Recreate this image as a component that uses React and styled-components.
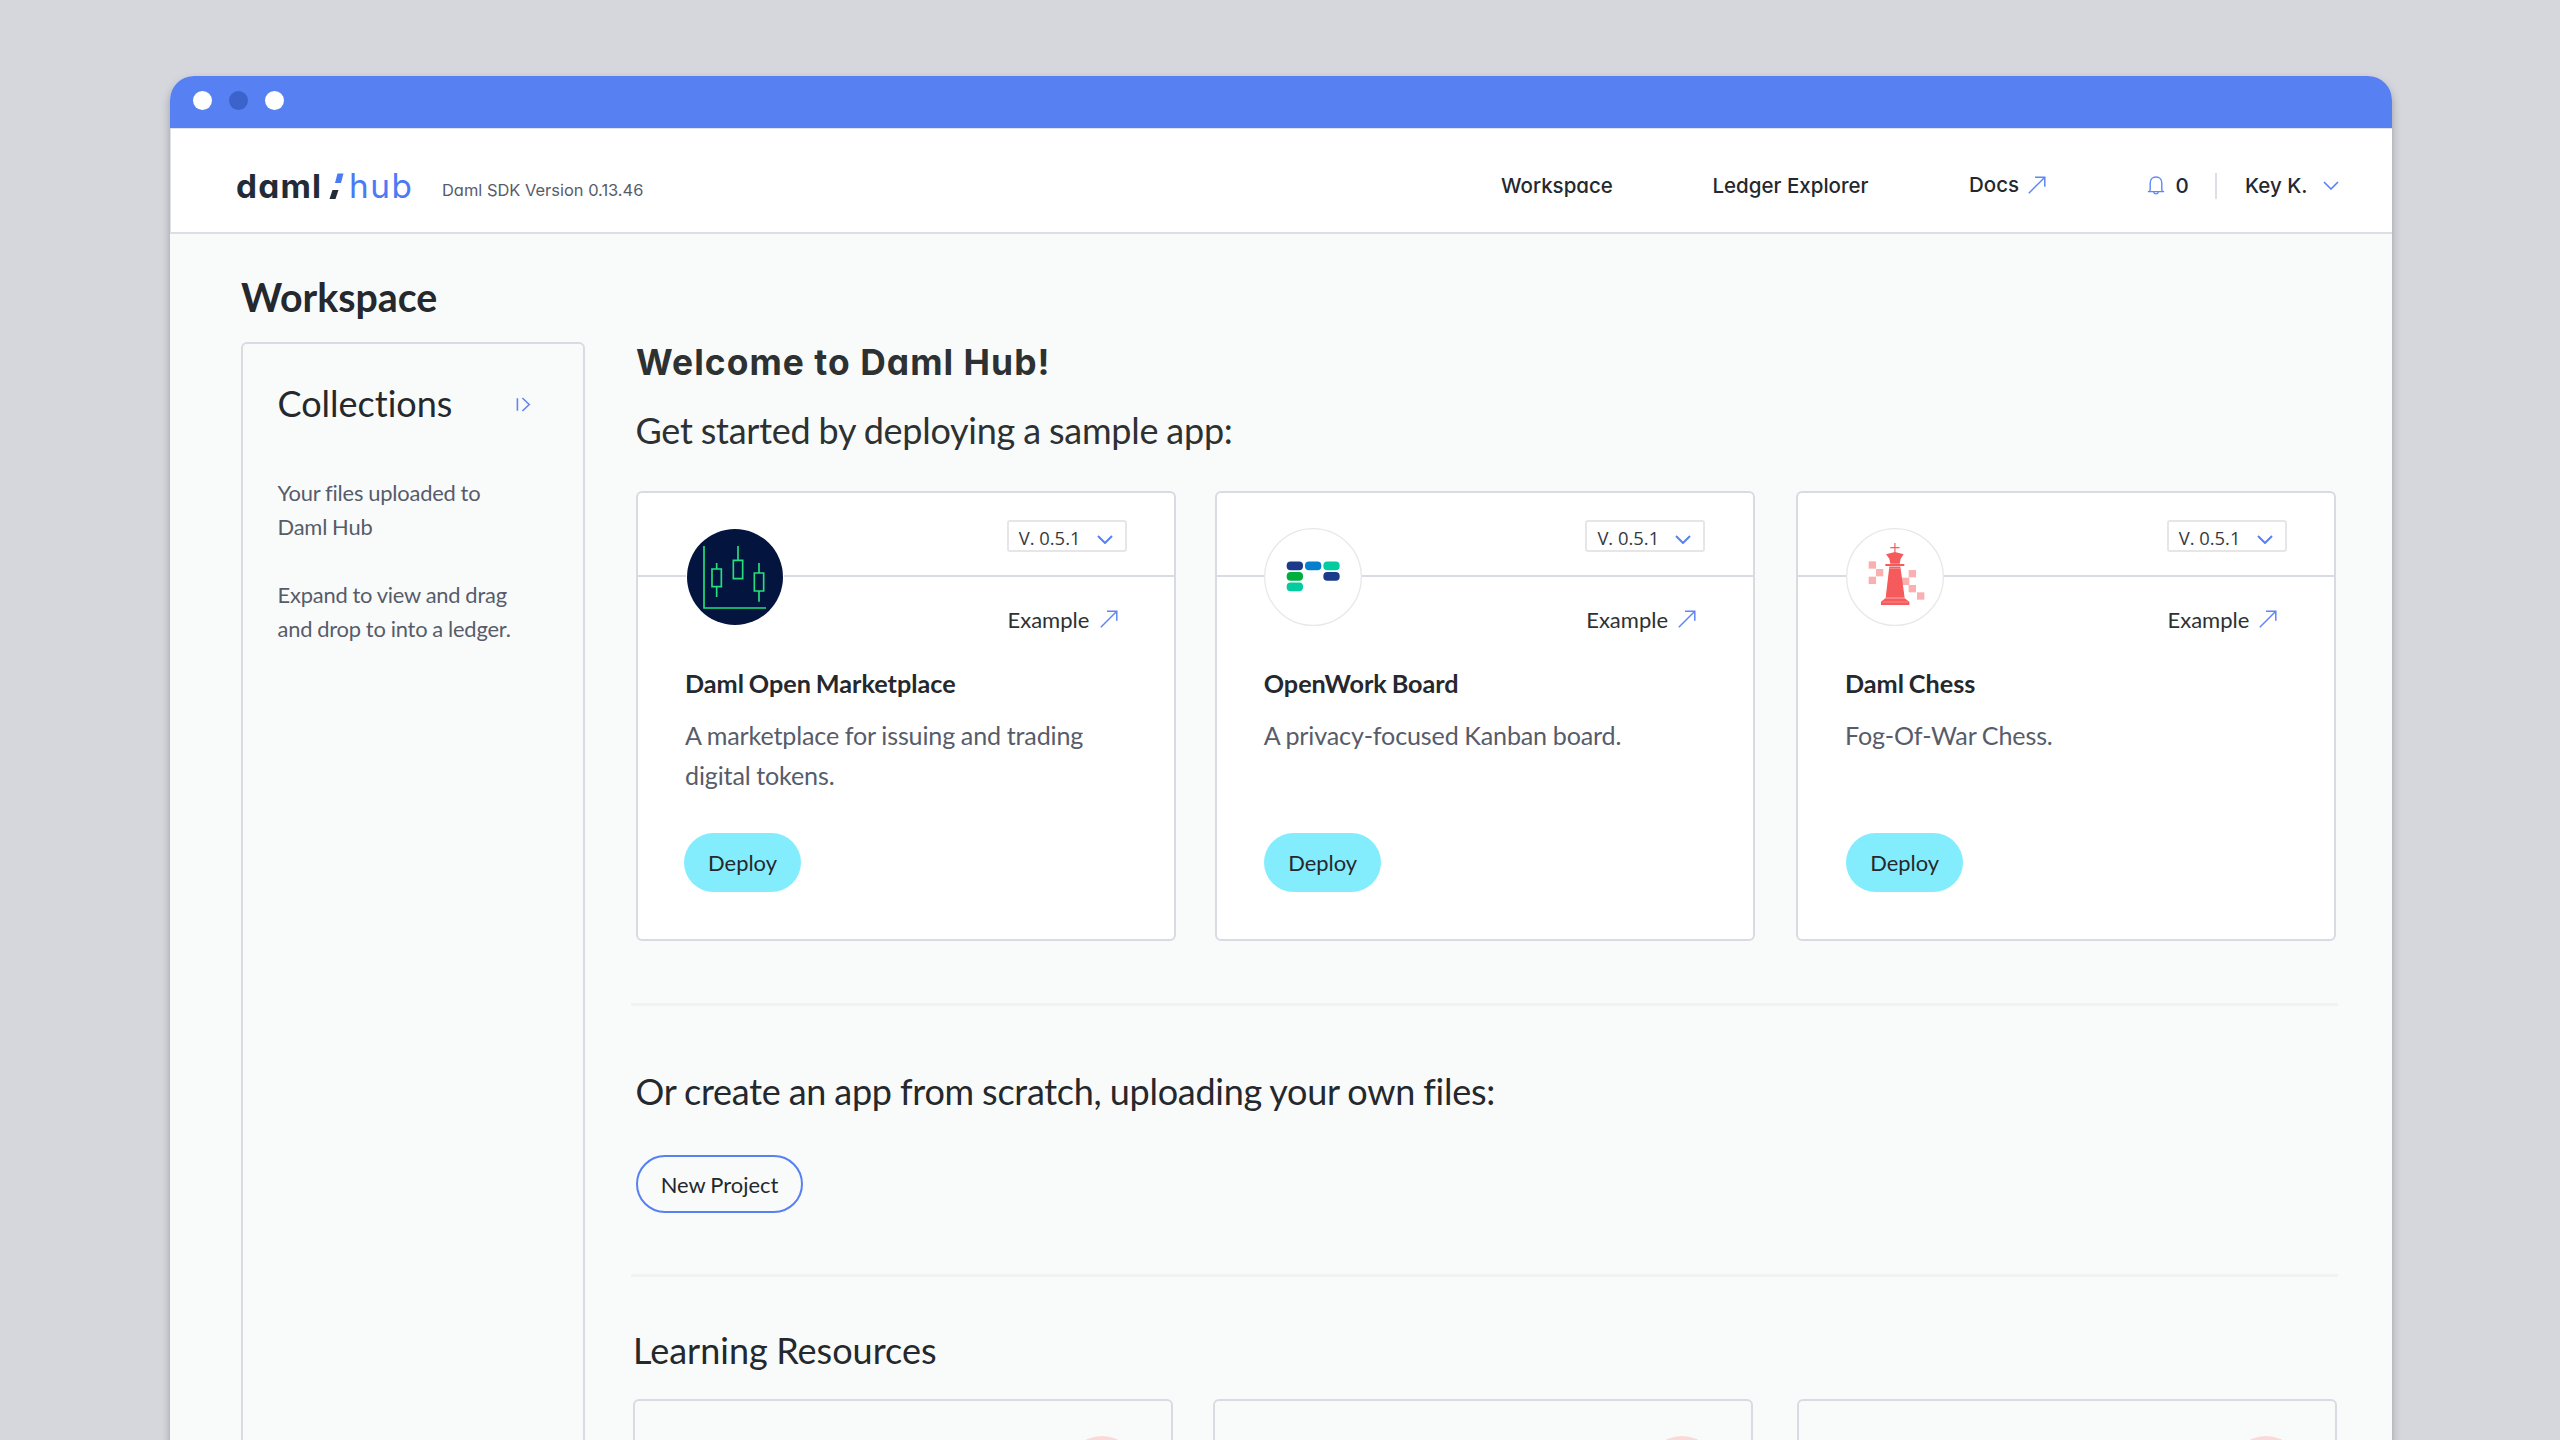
import React from "react";
import styled, { createGlobalStyle } from "styled-components";

const BLUE = "#5780f2";
const LINE = "#d9dbe3";
const INK = "#25282d";
const MUTED = "#575c6b";

const GlobalStyle = createGlobalStyle`
  * { box-sizing: border-box; }
  body {
    margin: 0;
    background: #d6d7dc;
    color: ${INK};
    font-family: Lato, "Liberation Sans", sans-serif;
    font-variant-ligatures: no-common-ligatures;
    overflow: hidden;
  }
  h1, h2, h3, p { margin: 0; font-weight: 400; word-spacing: -0.02em; }
  svg { display: block; flex: none; }
  button { font-family: inherit; color: inherit; }
`;

const Desktop = styled.div`
  height: 1440px;
  padding: 76px 168px 0 170px;
  overflow: hidden;
`;

const Window = styled.div`
  height: 1400px;
  border-radius: 24px 24px 0 0;
  overflow: hidden;
  background: #f9fbfa;
  box-shadow: 0 5px 9px rgba(40, 42, 60, 0.35);
`;

const TitleBar = styled.div`
  display: flex;
  align-items: center;
  gap: 16.8px;
  height: 52px;
  padding: 0 0 3px 23px;
  background: ${BLUE};
`;

const Dot = styled.span`
  width: 19px;
  height: 19px;
  border-radius: 50%;
  background: ${(p) => (p.$dim ? "#3c63cb" : "#fff")};
`;

const NavBar = styled.header`
  display: flex;
  align-items: center;
  justify-content: space-between;
  height: 106px;
  padding: 10px 53.5px 0 65px;
  background: #fff;
  border: 1px solid #dfe1ea;
  border-right: 0;
  border-bottom: 2px solid #dcdde5;
  font-family: Inter, "Liberation Sans", sans-serif;
  font-feature-settings: "cv11";
`;

const Brand = styled.div`
  display: flex;
  align-items: center;
`;

const Wordmark = styled.span`
  width: ${(p) => (p.$light ? 65 : 92.5)}px;
  font-size: 33.3px;
  line-height: 40px;
  font-weight: ${(p) => (p.$light ? 400 : 700)};
  letter-spacing: ${(p) => (p.$light ? 1.5 : 1.2)}px;
  color: ${(p) => (p.$light ? "#4a7bf4" : "#212c38")};
`;

const BrandMark = styled.svg`
  margin: 0 5.5px 0 0;
`;

const SdkVersion = styled.span`
  margin: 9px 0 0 28px;
  font-size: 16.45px;
  line-height: 26px;
  color: ${MUTED};
`;

const NavLinks = styled.nav`
  display: grid;
  grid-template-columns: 211.5px 256.5px 178.5px 67.5px 30px auto;
  align-items: center;
  font-size: 20.5px;
  line-height: 26px;
  font-weight: 500;
`;

const NavItem = styled.span`
  display: flex;
  align-items: center;
  gap: ${(p) => p.$gap || 0}px;
  margin-top: ${(p) => p.$shift || 0}px;
`;

const NavDivider = styled.span`
  width: 2px;
  height: 26px;
  background: #dddee6;
`;

const Body = styled.div`
  padding: 39.5px 54px 0 71px;
`;

const PageTitle = styled.h1`
  margin-bottom: 20.3px;
  font-size: 39.3px;
  line-height: 46px;
  font-weight: 700;
`;

const Columns = styled.div`
  display: flex;
  align-items: flex-start;
  gap: 46px;
`;

const Sidebar = styled.aside`
  flex: none;
  width: 344px;
  height: 1200px;
  margin-top: 2.7px;
  padding: 36.3px 34.5px 0;
  border: 2px solid ${LINE};
  border-radius: 6px;
`;

const SidebarHead = styled.div`
  display: flex;
  align-items: center;
  justify-content: space-between;
  margin-bottom: 51.5px;
  padding-right: 18px;

  svg { margin-top: 3px; }
`;

const SectionTitle = styled.h2`
  font-size: 36px;
  line-height: 44px;
  letter-spacing: ${(p) => (p.$tight ? "-0.0075em" : "normal")};
  color: ${(p) => (p.$soft ? "#2e3132" : INK)};
`;

const SidebarText = styled.p`
  margin-bottom: 34px;
  font-size: 21.9px;
  line-height: 34px;
  letter-spacing: -0.009em;
  color: ${MUTED};
`;

const Main = styled.main`
  flex: 1;
  min-width: 0;
`;

const Intro = styled.div`
  display: grid;
  gap: 23px;
  padding: 1px 0 0 4.5px;
`;

const Welcome = styled.h2`
  padding-left: 0.5px;
  font-family: Inter, "Liberation Sans", sans-serif;
  font-feature-settings: "cv11";
  font-size: 35.4px;
  line-height: 44px;
  font-weight: 700;
  letter-spacing: 1.05px;
  word-spacing: 0;
  color: #2e3132;
`;

const AppGrid = styled.div`
  display: grid;
  grid-template-columns: 578.7px 581.3px 540px;
  margin: 39px 0 62px;
  padding-left: 5px;
`;

const Card = styled.article`
  position: relative;
  width: 540px;
  height: 450px;
  background: #fff;
  border: 2px solid ${LINE};
  border-radius: 6px;
`;

const CardTop = styled.div`
  display: flex;
  justify-content: flex-end;
  height: 84.5px;
  padding: 27.3px 47.3px 0 0;
  border-bottom: 2px solid ${LINE};
`;

const VersionSelect = styled.div`
  display: flex;
  align-items: center;
  justify-content: space-between;
  width: 120px;
  height: 32px;
  padding: 3px 12px 0 10px;
  border: 2px solid #e6e6e8;
  border-radius: 3px;
  font-family: "Open Sans", "Noto Sans", sans-serif;
  font-size: 18.4px;
  line-height: 26px;
  color: #36393d;

  svg { margin-top: 3px; }
`;

const Badge = styled.svg`
  position: absolute;
  left: 47.7px;
  top: 34.8px;
`;

const ExampleLink = styled.div`
  display: flex;
  align-items: center;
  justify-content: space-between;
  width: 110px;
  margin: 28.6px 56.5px 33.2px auto;
  font-size: 22px;
  line-height: 28px;
  color: #2e3132;

  svg { margin-top: -2px; }
`;

const CardBody = styled.div`
  padding: 0 45px 0 47px;
`;

const CardTitle = styled.h3`
  margin-bottom: 16.3px;
  font-size: 25.2px;
  line-height: 32px;
  font-weight: 700;
  word-spacing: -0.05em;
`;

const CardText = styled.p`
  min-height: 80px;
  margin-bottom: 37.4px;
  font-size: 25.1px;
  line-height: 40px;
  letter-spacing: -0.006em;
  color: ${MUTED};
`;

const Pill = styled.button`
  display: block;
  width: ${(p) => (p.$outline ? 167 : 117)}px;
  height: ${(p) => (p.$outline ? 58 : 59)}px;
  margin-left: ${(p) => p.$inset || 0}px;
  padding: 1px 0 0 1px;
  border: ${(p) => (p.$outline ? `2px solid ${BLUE}` : "0")};
  border-radius: 30px;
  background: ${(p) => (p.$outline ? "transparent" : "#83edfd")};
  font-size: 21.9px;
  word-spacing: -0.03em;
`;

const Rule = styled.hr`
  height: 3px;
  margin: 0;
  border: 0;
  background: #f1f3f3;
`;

const Scratch = styled.section`
  display: grid;
  gap: 42px;
  padding: 63px 0 61.5px 4.5px;
`;

const Learning = styled.section`
  padding: 50.5px 0 0 2px;
`;

const ResourceGrid = styled.div`
  display: grid;
  grid-template-columns: 580px 583.5px 540px;
  margin-top: 27px;
`;

const ResourceCard = styled.article`
  display: flex;
  justify-content: flex-end;
  width: 540px;
  height: 300px;
  padding: 35.5px 33px 0 0;
  border: 2px solid ${LINE};
  border-radius: 6px;
`;

const ResourceDisc = styled.span`
  width: 72px;
  height: 72px;
  border-radius: 50%;
  background: #fbd9d9;
`;

const Arrow = () => (
  <svg width="18" height="18" viewBox="0 0 18 18" fill="none" stroke="#5f86f6" strokeWidth="1.5">
    <path d="M.8 17.2 16.8 1.2M7 1.2h9.8v9.6" />
  </svg>
);

const Chevron = ({ w = 1.6 }) => (
  <svg width="16" height="9" viewBox="0 0 16 9" fill="none" stroke="#5780f5" strokeWidth={w}>
    <path d="M1 1l7 7 7-7" />
  </svg>
);

const Bell = () => (
  <svg width="18" height="19" viewBox="0 0 18 19" fill="none" stroke="#5f86f6" strokeWidth="1.4">
    <path d="M.8 15.6h16.4M2.6 15.4c.5-.8.6-1.6.6-2.6V7c0-3.4 2.2-6 5.8-6s5.8 2.6 5.8 6v5.8c0 1 .1 1.8.6 2.6M6.6 15.8c.3 1.3 1.2 2.1 2.4 2.1s2.1-.8 2.4-2.1" />
  </svg>
);

const Expand = () => (
  <svg width="15" height="15" viewBox="0 0 15 15" fill="none" stroke="#5f86f6" strokeWidth="1.6">
    <path d="M1.4 1.2v12.6M6.4 1l6.8 6.5-6.8 6.5" />
  </svg>
);

const MarketArt = () => (
  <>
    <circle cx="165" cy="171" r="147" fill="#fff" />
    <circle cx="165" cy="171" r="144" fill="#03153f" />
    <g fill="none" stroke="#25df7c" strokeWidth="5">
      <path d="M72 78v186h186" />
      <path d="M110 129v18M110 200v31M174 78v43M237 129v30M237 213v32" />
      <path d="M96 147h28v53H96zM160 121h28v55h-28zM223 159h28v54h-28z" />
    </g>
  </>
);

const PILLS = [
  [86, 124.5, "#1b3a8a"],
  [141, 124.5, "#0480cf"],
  [196, 124.5, "#02cca0"],
  [86, 156, "#00ae3e"],
  [196, 156, "#1b3a8a"],
  [86, 187.5, "#02cca0"],
];

const BoardArt = () => (
  <>
    <circle cx="165" cy="171" r="145" fill="#fff" stroke="#e8e8ea" strokeWidth="4" />
    {PILLS.map(([x, y, fill]) => (
      <rect key={`${x}-${y}`} x={x} y={y} width="49" height="26" rx="12" fill={fill} />
    ))}
  </>
);

const SQUARES = [[86, 124], [108, 147], [86, 170], [206, 150], [186, 173], [206, 195], [231, 217]];

const ChessArt = () => (
  <>
    <circle cx="165" cy="171" r="145" fill="#fff" stroke="#e8e8ea" strokeWidth="4" />
    {SQUARES.map(([x, y]) => (
      <rect key={`${x}-${y}`} x={x} y={y} width="22" height="22" fill="#fbafaf" />
    ))}
    <g fill="#f55a5c">
      <path d="M163 69h3.5v12h12v3.5h-12V98H163V84.5h-12V81h12z" />
      <path d="M138 103l27-7 26 7-9 13-3 15h-28l-3-15z" />
      <path d="M136 132h57v6h-57z" />
      <path d="M148 139.5h33L194 233h-57z" />
      <path d="M136 235h58l14 10v10h-85v-10z" />
    </g>
    <path d="M147 145h35M128 246h76" stroke="#fba3a3" strokeWidth="2" />
  </>
);

const APPS = [
  { name: "Daml Open Marketplace", text: "A marketplace for issuing and trading digital tokens.", Art: MarketArt, inset: -1.5 },
  { name: "OpenWork Board", text: "A privacy-focused Kanban board.", Art: BoardArt, inset: 0 },
  { name: "Daml Chess", text: "Fog-Of-War Chess.", Art: ChessArt, inset: 0.7 },
];

const AppCard = ({ name, text, Art, inset }) => (
  <Card>
    <CardTop>
      <VersionSelect>
        V. 0.5.1
        <Chevron w={2} />
      </VersionSelect>
    </CardTop>
    <Badge width="98" height="98" viewBox="18 24 294 294">
      <Art />
    </Badge>
    <ExampleLink>
      Example
      <Arrow />
    </ExampleLink>
    <CardBody>
      <CardTitle>{name}</CardTitle>
      <CardText>{text}</CardText>
      <Pill $inset={inset}>Deploy</Pill>
    </CardBody>
  </Card>
);

export default function App() {
  return (
    <Desktop>
      <GlobalStyle />
      <Window>
        <TitleBar>
          <Dot />
          <Dot $dim />
          <Dot />
        </TitleBar>
        <NavBar>
          <Brand>
            <Wordmark>daml</Wordmark>
            <BrandMark width="15" height="26" viewBox="0 0 15 26">
              <path d="M8.5 0.5h6L12 10H6z" fill="#4a7bf4" />
              <path d="M3.5 17h6L6.5 26h-6z" fill="#212c38" />
            </BrandMark>
            <Wordmark $light>hub</Wordmark>
            <SdkVersion>Daml SDK Version 0.13.46</SdkVersion>
          </Brand>
          <NavLinks>
            <NavItem>Workspace</NavItem>
            <NavItem>Ledger Explorer</NavItem>
            <NavItem $gap={9} $shift={-2}>
              Docs
              <Arrow />
            </NavItem>
            <NavItem $gap={10}>
              <Bell />0
            </NavItem>
            <NavDivider />
            <NavItem $gap={15}>
              Key K.
              <Chevron />
            </NavItem>
          </NavLinks>
        </NavBar>
        <Body>
          <PageTitle>Workspace</PageTitle>
          <Columns>
            <Sidebar>
              <SidebarHead>
                <SectionTitle>Collections</SectionTitle>
                <Expand />
              </SidebarHead>
              <SidebarText>
                Your files uploaded to
                <br />
                Daml Hub
              </SidebarText>
              <SidebarText>
                Expand to view and drag
                <br />
                and drop to into a ledger.
              </SidebarText>
            </Sidebar>
            <Main>
              <Intro>
                <Welcome>Welcome to Daml Hub!</Welcome>
                <SectionTitle $soft $tight>Get started by deploying a sample app:</SectionTitle>
              </Intro>
              <AppGrid>
                {APPS.map((app) => (
                  <AppCard key={app.name} {...app} />
                ))}
              </AppGrid>
              <Rule />
              <Scratch>
                <SectionTitle $tight>Or create an app from scratch, uploading your own files:</SectionTitle>
                <Pill $outline>New Project</Pill>
              </Scratch>
              <Rule />
              <Learning>
                <SectionTitle>Learning Resources</SectionTitle>
                <ResourceGrid>
                  {[0, 1, 2].map((n) => (
                    <ResourceCard key={n}>
                      <ResourceDisc />
                    </ResourceCard>
                  ))}
                </ResourceGrid>
              </Learning>
            </Main>
          </Columns>
        </Body>
      </Window>
    </Desktop>
  );
}
